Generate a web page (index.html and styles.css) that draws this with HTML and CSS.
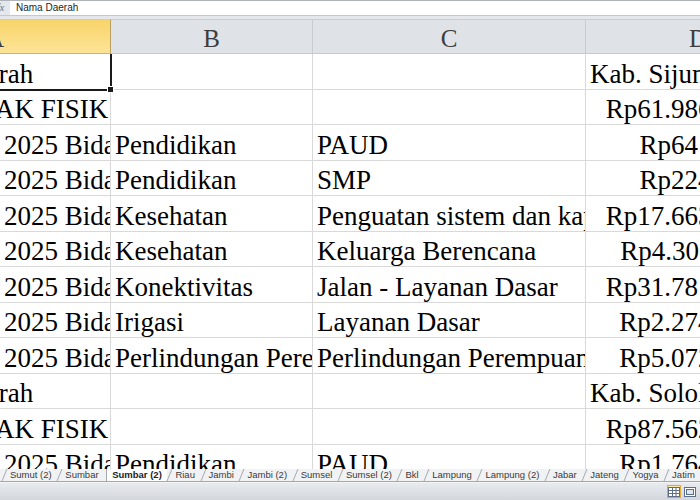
FILE: index.html
```html
<!DOCTYPE html>
<html lang="id">
<head>
  <meta charset="UTF-8">
  <title>Sumbar (2) - DAK Fisik 2025</title>
  <link rel="stylesheet" href="styles.css">
</head>
<body>
  <div class="top">
    <div class="formula-bar">
      <span class="fx">fx</span>
      <div class="formula-input">Nama Daerah</div>
    </div>
  </div>

  <div class="sheet">
    <div class="grid">
      <div class="col-head selected">A</div>
      <div class="col-head">B</div>
      <div class="col-head">C</div>
      <div class="col-head">D</div>

      <div class="cell active">Nama Daerah</div>
      <div class="cell"></div>
      <div class="cell"></div>
      <div class="cell">Kab. Sijunjung</div>

      <div class="cell">TOTAL DAK FISIK</div>
      <div class="cell"></div>
      <div class="cell"></div>
      <div class="cell num">Rp61.986.542.000</div>

      <div class="cell">DAK fisik 2025 Bidang Pendidikan</div>
      <div class="cell">Pendidikan</div>
      <div class="cell">PAUD</div>
      <div class="cell num">Rp641.250.000</div>

      <div class="cell">DAK fisik 2025 Bidang Pendidikan</div>
      <div class="cell">Pendidikan</div>
      <div class="cell">SMP</div>
      <div class="cell num">Rp224.580.000</div>

      <div class="cell">DAK fisik 2025 Bidang Kesehatan</div>
      <div class="cell">Kesehatan</div>
      <div class="cell">Penguatan sistem dan kapasitas kesehatan</div>
      <div class="cell num">Rp17.663.214.000</div>

      <div class="cell">DAK fisik 2025 Bidang Kesehatan</div>
      <div class="cell">Kesehatan</div>
      <div class="cell">Keluarga Berencana</div>
      <div class="cell num">Rp4.305.117.000</div>

      <div class="cell">DAK fisik 2025 Bidang Konektivitas</div>
      <div class="cell">Konektivitas</div>
      <div class="cell">Jalan - Layanan Dasar</div>
      <div class="cell num">Rp31.781.406.000</div>

      <div class="cell">DAK fisik 2025 Bidang Irigasi</div>
      <div class="cell">Irigasi</div>
      <div class="cell">Layanan Dasar</div>
      <div class="cell num">Rp2.274.590.000</div>

      <div class="cell">DAK fisik 2025 Bidang Perlindungan</div>
      <div class="cell">Perlindungan Perempuan dan Anak</div>
      <div class="cell">Perlindungan Perempuan dan Anak</div>
      <div class="cell num">Rp5.072.335.000</div>

      <div class="cell">Nama Daerah</div>
      <div class="cell"></div>
      <div class="cell"></div>
      <div class="cell">Kab. Solok Selatan</div>

      <div class="cell">TOTAL DAK FISIK</div>
      <div class="cell"></div>
      <div class="cell"></div>
      <div class="cell num">Rp87.562.910.000</div>

      <div class="cell">DAK fisik 2025 Bidang Pendidikan</div>
      <div class="cell">Pendidikan</div>
      <div class="cell">PAUD</div>
      <div class="cell num">Rp1.764.200.000</div>
    </div>
  </div>

  <div class="tabs">
    <span class="tab">Sumut (2)</span>
    <span class="tab">Sumbar</span>
    <span class="tab current">Sumbar (2)</span>
    <span class="tab">Riau</span>
    <span class="tab">Jambi</span>
    <span class="tab">Jambi (2)</span>
    <span class="tab">Sumsel</span>
    <span class="tab">Sumsel (2)</span>
    <span class="tab">Bkl</span>
    <span class="tab">Lampung</span>
    <span class="tab">Lampung (2)</span>
    <span class="tab">Jabar</span>
    <span class="tab">Jateng</span>
    <span class="tab">Yogya</span>
    <span class="tab">Jatim</span>
  </div>

  <div class="status">
    <div class="views">
      <span class="view on">
        <svg width="12" height="10" viewBox="0 0 12 10">
          <rect x="0.5" y="0.5" width="11" height="9" fill="#fff" stroke="#5b6f8a"/>
          <path d="M4.5 0.5v9M8 0.5v9M0.5 3.5h11M0.5 6.5h11" stroke="#5b6f8a" fill="none"/>
        </svg>
      </span>
      <span class="view">
        <svg width="12" height="10" viewBox="0 0 12 10">
          <rect x="0.5" y="0.5" width="11" height="9" fill="#fff" stroke="#5b6f8a"/>
          <rect x="2.5" y="2.5" width="7" height="5" fill="#dfe6ef" stroke="#5b6f8a"/>
        </svg>
      </span>
      <span class="view">
        <svg width="12" height="10" viewBox="0 0 12 10">
          <rect x="0.5" y="0.5" width="11" height="9" fill="#fff" stroke="#5b6f8a"/>
          <path d="M0.5 5h11M6 0.5v9" stroke="#5b6f8a" stroke-dasharray="1 1" fill="none"/>
        </svg>
      </span>
    </div>
  </div>
</body>
</html>
```

FILE: styles.css
```css
* {
  box-sizing: border-box;
}

body {
  margin: 0;
  width: 700px;
  height: 500px;
  overflow: hidden;
  display: flex;
  flex-direction: column;
  background: #fff;
  font-family: 'Liberation Serif', 'Times New Roman', serif;
}

/* formula bar */
.top {
  background: #e4e7eb;
  padding-bottom: 3px;
}

.formula-bar {
  display: flex;
  height: 16px;
  border-top: 1px solid #aeb3ba;
  border-bottom: 1px solid #c3c8ce;
}

.fx {
  width: 10px;
  overflow: hidden;
  text-indent: -3px;
  font: italic 10px 'Liberation Serif', serif;
  line-height: 14px;
  color: #6d737a;
}

.formula-input {
  flex: 1;
  background: #fff;
  padding-left: 6px;
  font: 10px 'Liberation Sans', Arial, sans-serif;
  line-height: 14px;
  color: #1e1e1e;
}

/* sheet */
.sheet {
  flex: 1;
  overflow: hidden;
}

.grid {
  display: grid;
  grid-template-columns: 231px 202px 273px 225px;
  grid-template-rows: 35px;
  grid-auto-rows: 35.5px;
  margin-left: -120px;
  width: 931px;
}

.col-head {
  display: flex;
  justify-content: center;
  align-items: flex-end;
  background: #dfe2e6;
  border-top: 1px solid #c9cdd3;
  border-bottom: 1px solid #c5c9cf;
  border-right: 1px solid #c8ccd1;
  font-size: 25px;
  line-height: 28px;
  color: #3d3d3d;
}

.col-head.selected {
  background: linear-gradient(#f8d46a, #fde397);
  border-bottom-color: #d8b453;
  border-right-color: #b9a062;
}

.cell {
  display: flex;
  align-items: flex-end;
  padding: 0 4px;
  border-right: 1px solid #d9d9d9;
  border-bottom: 1px solid #d9d9d9;
  font-size: 27px;
  line-height: 30px;
  color: #000;
  white-space: nowrap;
  overflow: hidden;
}

.cell.num {
  justify-content: flex-end;
}

.cell.active {
  position: relative;
  overflow: visible;
  border-right: 2px solid #1a1a1a;
  border-bottom: 2px solid #1a1a1a;
  margin-right: -1px;
  margin-bottom: -1px;
  z-index: 1;
}

.cell.active::after {
  content: '';
  position: absolute;
  right: -4px;
  bottom: -4px;
  width: 5px;
  height: 5px;
  background: #1a1a1a;
  border: 1px solid #fff;
}

/* sheet tabs */
.tabs {
  display: flex;
  height: 13px;
  padding-left: 2px;
  background: #f1f2f4;
  border-bottom: 1px solid #a3a8af;
  font: 9.5px 'Liberation Sans', Arial, sans-serif;
  line-height: 12px;
  color: #3a3a3a;
  white-space: nowrap;
}

.tab {
  position: relative;
  padding: 0 5.6px 0 8px;
}

.tab::before {
  content: '';
  position: absolute;
  left: 2px;
  top: 0;
  bottom: 0;
  width: 1px;
  background: #a4a9b0;
  transform: skewX(-22deg);
}

.tab.current {
  background: #fff;
  font-weight: bold;
  color: #222;
  border-left: 1px solid #a4a9b0;
  padding-left: 5px;
  margin-left: 2px;
}

.tab.current::before {
  display: none;
}

/* status bar */
.status {
  flex: 0 0 18px;
  display: flex;
  justify-content: flex-end;
  align-items: center;
  background: linear-gradient(#e8ebee, #d3d7dc);
  border-top: 1px solid #f3f4f6;
}

.views {
  display: flex;
  gap: 2px;
  margin-right: -13px;
}

.view {
  display: flex;
  align-items: center;
  justify-content: center;
  width: 14px;
  height: 13px;
}

.view.on {
  background: #fde9a6;
  border: 1px solid #e1a93d;
}
```
